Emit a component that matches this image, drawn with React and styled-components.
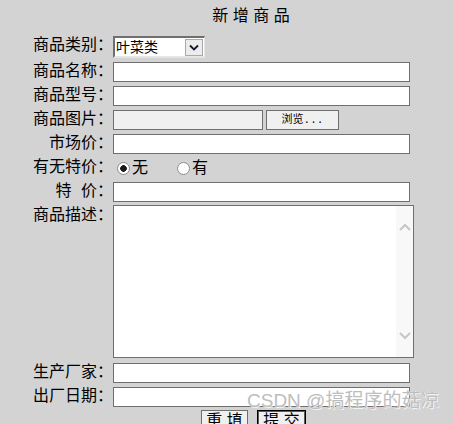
import React from "react";
import styled, { createGlobalStyle } from "styled-components";

const GlobalStyle = createGlobalStyle`
  html, body {
    margin: 0;
    padding: 0;
    background: #d3d3d3;
  }
  body {
    font-family: "Liberation Sans", "Noto Sans CJK SC", sans-serif;
    color: #000;
  }
  * {
    box-sizing: border-box;
  }
`;

const categories = ["叶菜类", "根茎类", "瓜果类", "菌菇类"];

const App = () => {
    return (
        <Page>
            <GlobalStyle />
            <Title>新 增 商 品</Title>

            <Form onSubmit={(e) => e.preventDefault()}>
                <Label>商品类别：</Label>
                <SelectBox>
                    <CategorySelect defaultValue="叶菜类">
                        {categories.map((c) => (
                            <option key={c}>{c}</option>
                        ))}
                    </CategorySelect>
                    <SelectArrow>
                        <svg width="10" height="7" viewBox="0 0 10 7">
                            <polyline
                                points="1,1.5 5,5.5 9,1.5"
                                fill="none"
                                stroke="#111a33"
                                strokeWidth="1.8"
                            />
                        </svg>
                    </SelectArrow>
                </SelectBox>

                <Label>商品名称：</Label>
                <TextInput />

                <Label>商品型号：</Label>
                <TextInput />

                <Label>商品图片：</Label>
                <FileRow>
                    <FilePath readOnly />
                    <BrowseButton type="button">浏览...</BrowseButton>
                </FileRow>

                <Label>市场价：</Label>
                <TextInput />

                <Label>有无特价：</Label>
                <RadioGroup>
                    <RadioOption>
                        <Radio type="radio" name="special" defaultChecked />
                        无
                    </RadioOption>
                    <RadioOption $spaced>
                        <Radio type="radio" name="special" />
                        有
                    </RadioOption>
                </RadioGroup>

                <Label $spread={5}>特 价：</Label>
                <TextInput />

                <Label>商品描述：</Label>
                <TextAreaBox>
                    <Description />
                    <ScrollTrack>
                        <svg width="12" height="8" viewBox="0 0 12 8">
                            <polyline
                                points="1,7 6,2 11,7"
                                fill="none"
                                stroke="#c6c6c6"
                                strokeWidth="2"
                            />
                        </svg>
                        <svg width="12" height="8" viewBox="0 0 12 8">
                            <polyline
                                points="1,1 6,6 11,1"
                                fill="none"
                                stroke="#c6c6c6"
                                strokeWidth="2"
                            />
                        </svg>
                    </ScrollTrack>
                </TextAreaBox>

                <Label>生产厂家：</Label>
                <TextInput />

                <Label>出厂日期：</Label>
                <TextInput />
            </Form>

            <ButtonRow>
                <FormButton type="reset">重 填</FormButton>
                <FormButton type="submit" $primary>
                    提 交
                </FormButton>
            </ButtonRow>

            <Watermark>CSDN @搞程序的菇凉</Watermark>
        </Page>
    );
};

export default App;

// Styled components
const Page = styled.div`
    position: relative;
    width: 454px;
    height: 424px;
    overflow: hidden;
    padding-top: 6px;
`;

const Title = styled.div`
    padding-left: 48px;
    text-align: center;
    font-size: 16px;
    line-height: 20px;
    font-weight: 400;
`;

const Form = styled.form`
    display: grid;
    grid-template-columns: 113px 1fr;
    row-gap: 4px;
    margin-top: 10px;
`;

const Label = styled.label`
    align-self: start;
    text-align: right;
    font-size: 16px;
    line-height: 16px;
    padding-top: 1px;
    white-space: nowrap;
    word-spacing: ${(props) => props.$spread || 0}px;
`;

const SelectBox = styled.div`
    display: flex;
    align-items: center;
    width: 92px;
    height: 22px;
    background: #fff;
    border-top: 2px solid #6f6f6f;
    border-left: 2px solid #6f6f6f;
    border-right: 1px solid #e6e6e6;
    border-bottom: 2px solid #e6e6e6;
`;

const CategorySelect = styled.select`
    appearance: none;
    flex: 1;
    min-width: 0;
    height: 100%;
    border: none;
    outline: none;
    background: transparent;
    padding: 0 0 0 1px;
    font-family: "Liberation Sans", "Noto Sans CJK SC", sans-serif;
    font-size: 14px;
    color: #000;
`;

const SelectArrow = styled.div`
    display: flex;
    align-items: center;
    justify-content: center;
    width: 18px;
    height: 17px;
    margin-right: 1px;
    background: #ececec;
    border: 1px solid #a9a9a9;
    pointer-events: none;
`;

const TextInput = styled.input`
    width: 297px;
    height: 20px;
    margin: 0;
    padding: 0 2px;
    border: 1px solid #6f6f6f;
    background: #fff;
    font-family: "Liberation Sans", "Noto Sans CJK SC", sans-serif;
    font-size: 14px;
    outline: none;
`;

const FileRow = styled.div`
    display: flex;
    gap: 3px;
`;

const FilePath = styled.input`
    width: 150px;
    height: 20px;
    margin: 0;
    border: 1px solid #6f6f6f;
    background: #f0f0f0;
    outline: none;
`;

const BrowseButton = styled.button`
    width: 73px;
    height: 20px;
    margin: 0;
    padding: 0;
    border: 1px solid #6f6f6f;
    background: #f0f0f0;
    font-family: "Liberation Mono", "Noto Sans CJK SC", monospace;
    font-size: 11px;
    line-height: 18px;
    color: #000;
`;

const RadioGroup = styled.div`
    display: flex;
    align-items: center;
    height: 20px;
`;

const RadioOption = styled.label`
    display: flex;
    align-items: center;
    margin-left: ${(props) => (props.$spaced ? "25px" : "0")};
    font-size: 16px;
    line-height: 20px;
`;

const Radio = styled.input`
    appearance: none;
    width: 13px;
    height: 13px;
    margin: 1px 2px 0 4px;
    border: 1px solid #8e8e8e;
    border-radius: 50%;
    background: #fff;

    &:checked {
        background: radial-gradient(circle, #1a1a1a 0 3px, #fff 3.6px);
    }
`;

const TextAreaBox = styled.div`
    display: flex;
    width: 301px;
    height: 153px;
    border: 1px solid #6f6f6f;
    background: #fff;
    margin-top: -1px;
    margin-bottom: 1px;
`;

const Description = styled.textarea`
    flex: 1;
    border: none;
    outline: none;
    resize: none;
    overflow: hidden;
    background: transparent;
`;

const ScrollTrack = styled.div`
    display: flex;
    flex-direction: column;
    justify-content: space-between;
    align-items: center;
    width: 17px;
    padding: 17px 0;
    background: #f8f8f8;
`;

const ButtonRow = styled.div`
    display: flex;
    justify-content: center;
    gap: 9px;
    padding-left: 53px;
    margin-top: 3px;
`;

const FormButton = styled.button`
    width: ${(props) => (props.$primary ? "49px" : "47px")};
    height: 22px;
    margin: 0;
    padding: 0;
    border: 1px solid ${(props) => (props.$primary ? "#000" : "#6f6f6f")};
    box-shadow: ${(props) =>
        props.$primary ? "inset 0 0 0 1px #5c5c5c" : "none"};
    background: #f0f0f0;
    font-family: "Liberation Sans", "Noto Sans CJK SC", sans-serif;
    font-size: 16px;
    line-height: 20px;
    color: #000;
`;

const Watermark = styled.div`
    position: absolute;
    left: 247px;
    top: 389px;
    font-family: "Liberation Sans", "Noto Sans CJK SC", sans-serif;
    font-size: 19px;
    line-height: 24px;
    color: #bdbdbd;
    text-shadow: 0 0 1px #fff, 1px 1px 0 rgba(255, 255, 255, 0.7);
    white-space: nowrap;
    pointer-events: none;
`;
